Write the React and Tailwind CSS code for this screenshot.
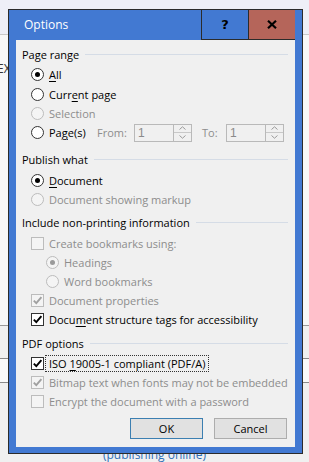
import React from "react";

const F = { fontFamily: '"Open Sans", "Noto Sans", sans-serif' };

function Radio({ checked, disabled }) {
  return (
    <span
      className={
        disabled
          ? "w-[13px] h-[13px] rounded-full border border-[#bcbcbc] bg-[#f4f4f4] flex items-center justify-center shrink-0"
          : "w-[13px] h-[13px] rounded-full border border-[#333333] bg-white flex items-center justify-center shrink-0"
      }
    >
      {checked && (
        <span
          className={
            disabled
              ? "w-[5px] h-[5px] rounded-full bg-[#9a9a9a]"
              : "w-[5px] h-[5px] rounded-full bg-black"
          }
        />
      )}
    </span>
  );
}

function Check({ checked, disabled }) {
  return (
    <span
      className={
        disabled
          ? "w-[13px] h-[13px] border border-[#bcbcbc] bg-[#f4f4f4] flex items-center justify-center shrink-0"
          : "w-[13px] h-[13px] border border-[#333333] bg-white flex items-center justify-center shrink-0"
      }
    >
      {checked && (
        <svg width="11" height="11" viewBox="0 0 11 11">
          <path
            d="M1.8 5.6 L4.3 8.2 L9.4 2.2"
            fill="none"
            stroke={disabled ? "#a0a0a0" : "#000"}
            strokeWidth="1.9"
          />
        </svg>
      )}
    </span>
  );
}

function Header({ children, className }) {
  return (
    <div className={"flex items-center h-[20px] pl-[6px] pr-[7px] " + className}>
      <span className="text-black whitespace-nowrap">{children}</span>
      <span className="flex-1 h-px bg-[#d5dce6] ml-[6px]" />
    </div>
  );
}

function Spin() {
  return (
    <div className="flex items-center">
      <div className="w-[40px] h-[18px] border border-[#b9b9b9] bg-[#f0f0f0] text-[#8a8a8a] pl-[3px] leading-[16px] text-[12px]" style={{ fontFamily: '"Liberation Sans", Arial, sans-serif' }}>
        1
      </div>
      <div className="w-[18px] h-[18px] flex flex-col border border-[#b9b9b9] border-l-0">
        <div className="flex-1 border-b border-[#c8c8c8] flex items-center justify-center">
          <svg width="7" height="4" viewBox="0 0 7 4"><path d="M0.5 3.5 L3.5 0.8 L6.5 3.5" fill="none" stroke="#9a9a9a" strokeWidth="1" /></svg>
        </div>
        <div className="flex-1 flex items-center justify-center">
          <svg width="7" height="4" viewBox="0 0 7 4"><path d="M0.5 0.5 L3.5 3.2 L6.5 0.5" fill="none" stroke="#9a9a9a" strokeWidth="1" /></svg>
        </div>
      </div>
    </div>
  );
}

export default function App() {
  const dis = "text-[#8d8d8d] whitespace-nowrap";
  return (
    <div className="relative w-[309px] h-[462px] overflow-hidden bg-[#f0f0f0] text-[11px] leading-none" style={F}>
      {/* background document */}
      <div className="flex flex-col h-full">
        <div className="h-[35px] bg-[#eeeff7] border-b border-[#c9c9c9]" />
        <div className="h-[290px] bg-[#f8f8f8] flex flex-col">
          <div className="mt-[27px] -ml-[3px] text-[12px] text-[#333] leading-[14px] w-[12px] overflow-hidden">EX</div>
        </div>
        <div className="h-[33px] bg-[#f0f0f0] border-t border-[#9a9a9a]" />
        <div className="h-[25px] bg-[#fafafa] border-t border-b border-[#8a8a8a]" />
        <div className="flex-1 bg-[#f0f0f0] flex items-end justify-center pb-[1px]">
          <span className="text-[#2f6fb8] text-[12px]">(publishing online)</span>
        </div>
      </div>

      {/* dialog window */}
      <div className="absolute left-[8px] top-[9px] w-[295px] h-[445px] border border-[#2b2b2b] bg-[#4279d2] flex flex-col">
        <div className="h-[30px] flex items-stretch">
          <div className="flex-1 flex items-center pl-[15px] text-white text-[12px]">Options</div>
          <div className="w-[48px] border-l border-b border-r border-[#2b2b2b] flex items-center justify-center font-bold text-[13px] text-black" style={{ fontFamily: '"DejaVu Sans", sans-serif' }}>?</div>
          <div className="w-[46px] bg-[#b5655a] border-b border-[#2b2b2b] flex items-center justify-center">
            <svg width="10" height="9" viewBox="0 0 10 9"><path d="M1 0.8 L9 8.2 M9 0.8 L1 8.2" stroke="#000" strokeWidth="2.2" /></svg>
          </div>
          <div className="w-[7px]" />
        </div>

        <div className="mx-[7px] mb-[6px] flex-1 bg-[#f0f0f0] flex flex-col pt-[4px] text-black">
          <Header>Page range</Header>
          <div className="pl-[15px] flex flex-col">
            <div className="flex items-center h-[19px] mt-[1px]">
              <Radio checked />
              <span className="ml-[5px]"><span className="underline underline-offset-2">A</span>ll</span>
            </div>
            <div className="flex items-center h-[20px]">
              <Radio />
              <span className="ml-[5px]">Curr<span className="underline underline-offset-2">e</span>nt page</span>
            </div>
            <div className="flex items-center h-[19px]">
              <Radio disabled />
              <span className={"ml-[5px] " + dis}>Selection</span>
            </div>
            <div className="flex items-center h-[19px]">
              <Radio />
              <span className="ml-[5px] w-[48px] shrink-0 whitespace-nowrap">Pa<span className="underline underline-offset-2">g</span>e(s)</span>
              <span className={"w-[37px] shrink-0 " + dis}>From:</span>
              <Spin />
              <span className={"ml-[10px] w-[24px] shrink-0 " + dis}>To:</span>
              <Spin />
            </div>
          </div>

          <Header className="mt-[7px]">Publish what</Header>
          <div className="pl-[15px] flex flex-col">
            <div className="flex items-center h-[19px] mt-[2px]">
              <Radio checked />
              <span className="ml-[5px]"><span className="underline underline-offset-2">D</span>ocument</span>
            </div>
            <div className="flex items-center h-[19px]">
              <Radio disabled />
              <span className={"ml-[5px] " + dis}>Document showing markup</span>
            </div>
          </div>

          <Header className="mt-[3px]">Include non-printing information</Header>
          <div className="pl-[15px] flex flex-col">
            <div className="flex items-center h-[19px] mt-[2px]">
              <Check disabled />
              <span className={"ml-[5px] " + dis}>Create bookmarks using:</span>
            </div>
            <div className="pl-[15px] flex flex-col">
              <div className="flex items-center h-[19px]">
                <Radio checked disabled />
                <span className={"ml-[5px] " + dis}>Headings</span>
              </div>
              <div className="flex items-center h-[19px]">
                <Radio disabled />
                <span className={"ml-[5px] " + dis}>Word bookmarks</span>
              </div>
            </div>
            <div className="flex items-center h-[19px]">
              <Check checked disabled />
              <span className={"ml-[5px] " + dis}>Document properties</span>
            </div>
            <div className="flex items-center h-[19px]">
              <Check checked />
              <span className="ml-[5px] whitespace-nowrap">Docu<span className="underline underline-offset-2">m</span>ent structure tags for accessibility</span>
            </div>
          </div>

          <Header className="mt-[4px]">PDF options</Header>
          <div className="pl-[15px] flex flex-col">
            <div className="flex items-center h-[19px] mt-[1px]">
              <Check checked />
              <span className="ml-[1px] px-[3px] py-[2px] border border-dotted border-[#333] whitespace-nowrap">ISO <span className="underline underline-offset-2">1</span>9005-1 compliant (PDF/A)</span>
            </div>
            <div className="flex items-center h-[19px]">
              <Check checked disabled />
              <span className={"ml-[5px] " + dis}>Bitmap text when fonts may not be embedded</span>
            </div>
            <div className="flex items-center h-[19px]">
              <Check disabled />
              <span className={"ml-[5px] " + dis}>Encrypt the document with a password</span>
            </div>
          </div>

          <div className="flex justify-end gap-[11px] pr-[8px] mt-[7px]">
            <div className="w-[73px] h-[21px] border border-[#3c7fb1] bg-[#e1e1e1] flex items-center justify-center">OK</div>
            <div className="w-[73px] h-[21px] border border-[#adadad] bg-[#e1e1e1] flex items-center justify-center">Cancel</div>
          </div>
        </div>
      </div>
    </div>
  );
}
